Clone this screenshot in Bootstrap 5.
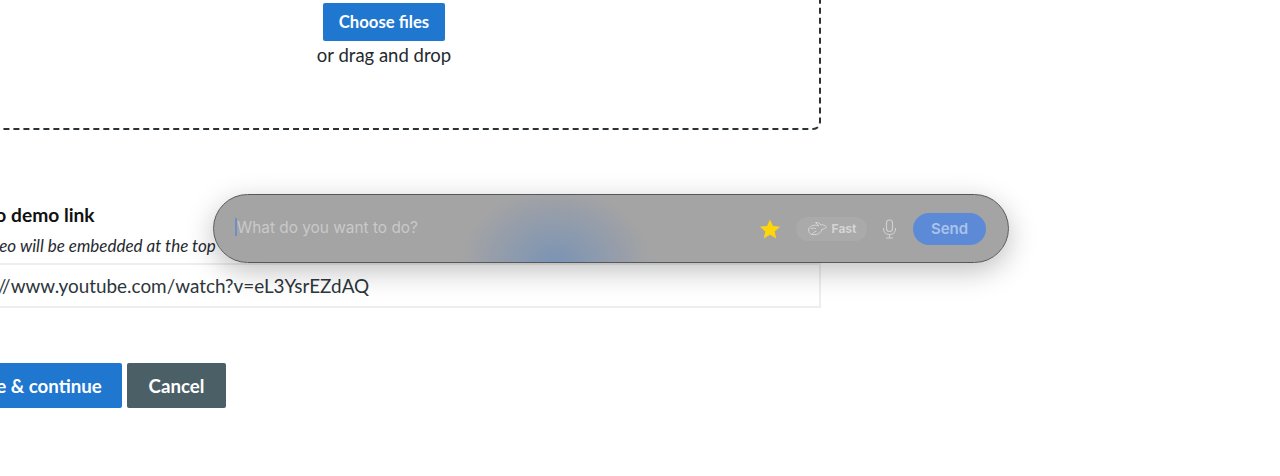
<!DOCTYPE html>
<html lang="en">
<head>
    <meta charset="UTF-8">
    <meta name="viewport" content="width=device-width, initial-scale=1.0">
    <title>Edit listing</title>
    <link rel="stylesheet" href="https://cdn.jsdelivr.net/npm/bootstrap@5.3.0/dist/css/bootstrap.min.css">
    <style>
        html, body {
            height: 476px;
            overflow: hidden;
        }
        body {
            background-color: #fff;
            color: #1f2a30;
            font-family: Lato, "Liberation Sans", sans-serif;
            position: relative;
        }
        .form-wrap {
            width: 874px;
            margin-left: -53px;
            margin-top: -120px;
        }
        .drop-zone {
            height: 250px;
            border: 2px dashed #2b3134;
            border-radius: 8px;
            padding-top: 121px;
            font-size: 18.5px;
        }
        .btn-choose {
            background-color: #1f77d0;
            border: 0;
            color: #fff;
            font-weight: 700;
            font-size: 16.7px;
            height: 38px;
            width: 122px;
            padding: 2px 0 0;
            border-radius: 2px;
        }
        .drop-hint {
            margin-top: 1px;
            line-height: 27px;
        }
        .demo-block {
            margin-top: 73px;
        }
        .demo-title {
            font-size: 19.2px;
            font-weight: 700;
            line-height: 24px;
            color: #111;
            padding-left: 9px;
        }
        .demo-help {
            font-size: 17px;
            font-style: italic;
            line-height: 24px;
            margin-top: 7px;
            margin-left: -4px;
        }
        .demo-input {
            height: 45px;
            margin-top: 5px;
            border: 2px solid #eceeef;
            border-radius: 0;
            font-size: 18.9px;
            color: #2c363b;
            padding: 0 2px;
            font-family: Lato, "Liberation Sans", sans-serif;
        }
        .form-actions {
            margin-top: 55px;
            gap: 5px;
        }
        .btn-save, .btn-cancel {
            height: 45px;
            border: 0;
            border-radius: 2px;
            color: #fff;
            font-size: 18.7px;
            font-weight: 700;
            padding: 1px 0 0;
        }
        .btn-save {
            background-color: #1f77d0;
            width: 175px;
        }
        .btn-cancel {
            background-color: #4a5f66;
            width: 99px;
        }
        .ask-bar {
            position: absolute;
            left: 213px;
            top: 194px;
            width: 796px;
            height: 69px;
            border: 1px solid #55595c;
            border-radius: 35px;
            background: radial-gradient(ellipse 95px 75px at 342px 68px, #7b93b4 0%, #8b9aae 40%, #9a9fa8 75%, #a4a4a4 100%);
            box-shadow: 0 8px 28px rgba(0, 0, 0, 0.25);
            padding: 0 22px 0 21px;
            font-family: Inter, "Liberation Sans", sans-serif;
        }
        .ask-caret {
            width: 2px;
            height: 18px;
            background-color: #6f8fc4;
            margin-top: -3px;
        }
        .ask-text {
            color: #c9c9c9;
            font-size: 15.4px;
            margin-top: -1px;
        }
        .speed-pill {
            width: 71px;
            height: 24px;
            background-color: #aaaaaa;
            color: #d4d4d4;
            font-size: 12px;
            font-weight: 700;
            margin-left: 15px;
            margin-right: 15px;
        }
        .btn-send {
            width: 73px;
            height: 32px;
            background-color: #5d8ad6;
            color: #a9c3ec;
            font-size: 15px;
            font-weight: 600;
            border: 0;
            padding: 2px 0 0;
        }
    </style>
</head>
<body>

    <div class="form-wrap">
        <div class="drop-zone text-center">
            <button type="button" class="btn btn-choose">Choose files</button>
            <div class="drop-hint">or drag and drop</div>
        </div>

        <div class="demo-block">
            <div class="demo-title">Video demo link</div>
            <div class="demo-help">Your video will be embedded at the top</div>
            <input type="text" class="form-control demo-input" value="https://www.youtube.com/watch?v=eL3YsrEZdAQ">
        </div>

        <div class="form-actions d-flex">
            <button type="button" class="btn btn-save">Save &amp; continue</button>
            <button type="button" class="btn btn-cancel">Cancel</button>
        </div>
    </div>

    <!-- floating prompt bar -->
    <div class="ask-bar d-flex align-items-center">
        <span class="ask-caret"></span>
        <span class="ask-text flex-grow-1">What do you want to do?</span>
        <svg width="22" height="22" viewBox="0 0 24 24"><path fill="#ffd60a" d="M12 1.500l3.200 7.200 7.800.8-5.900 5.200 1.700 7.700L12 18.400l-6.800 4 1.700-7.700L1 9.500l7.800-.8z"/></svg>
        <div class="speed-pill rounded-pill d-flex align-items-center justify-content-center gap-1">
            <svg width="21" height="15" viewBox="0 0 21 15" fill="none" stroke="#d4d4d4" stroke-width="1" stroke-linejoin="round" stroke-linecap="round"><path d="M1.500 9c0-3 3.500-5 7-4.800 1.500.1 2.500.4 3.500.8C11 3.800 9.500 2.800 8.500 1.500c2.200-.2 4.300.8 5.500 2.500 1.800-.6 4 .3 5.500 2-1 1.600-2.600 2.300-4.500 2.200-.6 2.600-2.800 4.800-5.500 5.300H5C2.800 13 1.500 11 1.500 9z"/><path d="M5 13.500c.5-1.700 2-2.800 4-3M4 7.500c1.500-.5 3-.5 4.500 0"/></svg>
            <span>Fast</span>
        </div>
        <svg class="me-3" width="15" height="20" viewBox="0 0 15 20" fill="none" stroke="#d0d0d0" stroke-width="1.100"><rect x="4.500" y="1" width="6" height="11.500" rx="3"/><path d="M1.500 9v1c0 3.300 2.700 5.500 6 5.500s6-2.200 6-5.500V9M7.500 15.500V19M4 19h7"/></svg>
        <button type="button" class="btn btn-send rounded-pill">Send</button>
    </div>

</body>
</html>
